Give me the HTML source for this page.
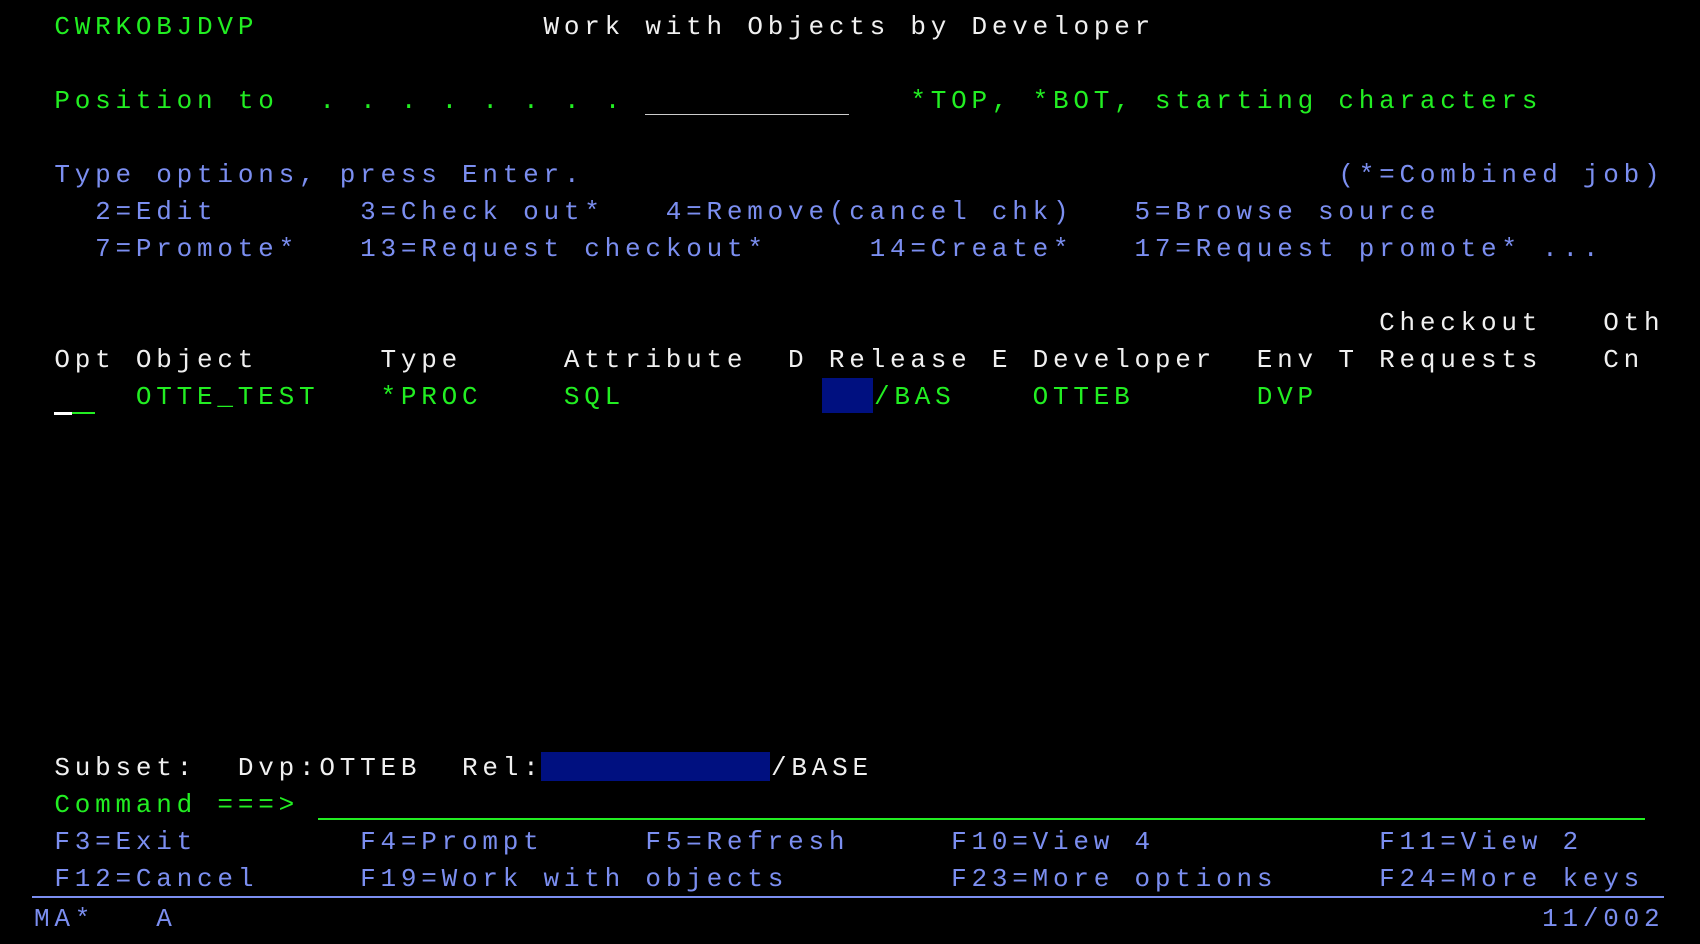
<!DOCTYPE html>
<html><head><meta charset="utf-8"><style>
html,body{margin:0;padding:0;background:#000;width:1700px;height:944px;overflow:hidden}
.s{position:relative;width:1700px;height:944px;font-family:"Liberation Mono","DejaVu Sans Mono",monospace;font-size:26px;letter-spacing:4.78px;line-height:37px}
.t{position:absolute;white-space:pre;left:calc(34px + var(--c)*20.38px);margin-top:1px}
.g{color:#22ee22}.w{color:#f0f0f0}.b{color:#7b8ef0}
.box{position:absolute;background:#001080}
.ln{position:absolute;height:2px}
</style></head><body><div class="s">
<div class="t g" style="--c:1;top:8px">CWRKOBJDVP</div>
<div class="t w" style="--c:25;top:8px">Work with Objects by Developer</div>

<div class="t g" style="--c:1;top:82px">Position to  . . . . . . . .</div>
<div class="ln" style="left:645px;width:204px;top:114px;height:1px;background:#ccc"></div>
<div class="t g" style="--c:43;top:82px">*TOP, *BOT, starting characters</div>

<div class="t b" style="--c:1;top:156px">Type options, press Enter.</div>
<div class="t b" style="--c:64;top:156px">(*=Combined job)</div>
<div class="t b" style="--c:3;top:193px">2=Edit</div>
<div class="t b" style="--c:16;top:193px">3=Check out*</div>
<div class="t b" style="--c:31;top:193px">4=Remove(cancel chk)</div>
<div class="t b" style="--c:54;top:193px">5=Browse source</div>
<div class="t b" style="--c:3;top:230px">7=Promote*</div>
<div class="t b" style="--c:16;top:230px">13=Request checkout*</div>
<div class="t b" style="--c:41;top:230px">14=Create*</div>
<div class="t b" style="--c:54;top:230px">17=Request promote* ...</div>

<div class="t w" style="--c:66;top:304px">Checkout</div>
<div class="t w" style="--c:77;top:304px">Oth</div>
<div class="t w" style="--c:1;top:341px">Opt</div>
<div class="t w" style="--c:5;top:341px">Object</div>
<div class="t w" style="--c:17;top:341px">Type</div>
<div class="t w" style="--c:26;top:341px">Attribute</div>
<div class="t w" style="--c:37;top:341px">D</div>
<div class="t w" style="--c:39;top:341px">Release</div>
<div class="t w" style="--c:47;top:341px">E</div>
<div class="t w" style="--c:49;top:341px">Developer</div>
<div class="t w" style="--c:60;top:341px">Env</div>
<div class="t w" style="--c:64;top:341px">T</div>
<div class="t w" style="--c:66;top:341px">Requests</div>
<div class="t w" style="--c:77;top:341px">Cn</div>

<div class="ln" style="background:#22ee22;left:54px;width:41px;top:412px"></div>
<div class="ln" style="background:#fff;left:54px;width:18px;top:412px;height:3px"></div>
<div class="t g" style="--c:5;top:378px">OTTE_TEST</div>
<div class="t g" style="--c:17;top:378px">*PROC</div>
<div class="t g" style="--c:26;top:378px">SQL</div>
<div class="box" style="left:822px;width:51px;top:378px;height:35px"></div>
<div class="t g" style="left:874px;top:378px">/BAS</div>
<div class="t g" style="--c:49;top:378px">OTTEB</div>
<div class="t g" style="--c:60;top:378px">DVP</div>

<div class="t w" style="--c:1;top:749px">Subset:  Dvp:OTTEB  Rel:</div>
<div class="box" style="left:541px;width:229px;top:752px;height:29px"></div>
<div class="t w" style="left:771px;top:749px">/BASE</div>
<div class="t g" style="--c:1;top:786px">Command ===&gt;</div>
<div class="ln" style="background:#22ee22;left:318px;width:1327px;top:818px"></div>
<div class="t b" style="--c:1;top:823px">F3=Exit</div>
<div class="t b" style="--c:16;top:823px">F4=Prompt</div>
<div class="t b" style="--c:30;top:823px">F5=Refresh</div>
<div class="t b" style="--c:45;top:823px">F10=View 4</div>
<div class="t b" style="--c:66;top:823px">F11=View 2</div>
<div class="t b" style="--c:1;top:860px">F12=Cancel</div>
<div class="t b" style="--c:16;top:860px">F19=Work with objects</div>
<div class="t b" style="--c:45;top:860px">F23=More options</div>
<div class="t b" style="--c:66;top:860px">F24=More keys</div>
<div class="ln" style="background:#7b8ef0;left:32px;width:1632px;top:896px"></div>
<div class="t b" style="--c:0;top:900px">MA*   A</div>
<div class="t b" style="--c:74;top:900px">11/002</div>
</div></body></html>
